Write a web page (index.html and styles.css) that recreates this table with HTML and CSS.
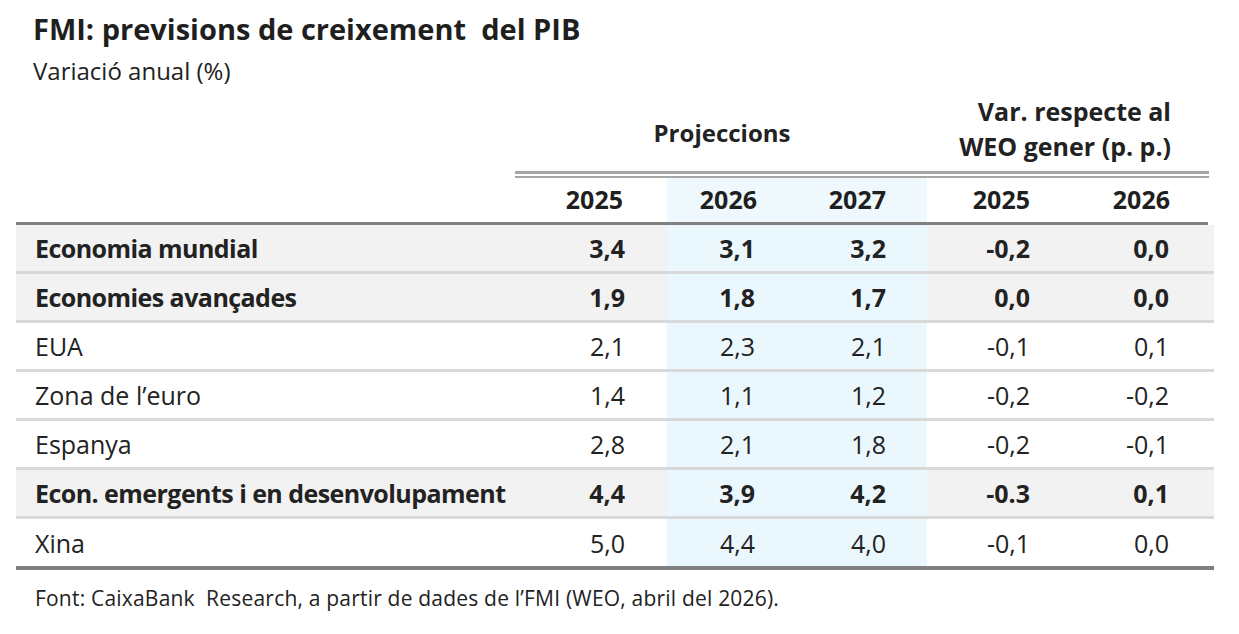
FILE: index.html
```html
<!DOCTYPE html>
<html lang="ca">
<head>
<meta charset="utf-8">
<title>FMI: previsions de creixement del PIB</title>
<link rel="stylesheet" href="styles.css">
</head>
<body>
<div class="page">
  <h1 class="title">FMI: previsions de creixement&nbsp; del PIB</h1>
  <p class="subtitle">Variació anual (%)</p>

  <div class="table">
    <div class="head-top">
      <div class="proj">Projeccions</div>
      <div class="var">Var. respecte al<br>WEO gener (p. p.)</div>
    </div>
    <div class="dbl"></div>
    <div class="row years">
      <div class="c"></div>
      <div class="c">2025</div>
      <div class="c hl">2026</div>
      <div class="c hl">2027</div>
      <div class="c">2025</div>
      <div class="c">2026</div>
    </div>

    <div class="row shade bold">
      <div class="c">Economia mundial</div>
      <div class="c">3,4</div>
      <div class="c hl">3,1</div>
      <div class="c hl">3,2</div>
      <div class="c">-0,2</div>
      <div class="c">0,0</div>
    </div>
    <div class="row shade bold">
      <div class="c">Economies avançades</div>
      <div class="c">1,9</div>
      <div class="c hl">1,8</div>
      <div class="c hl">1,7</div>
      <div class="c">0,0</div>
      <div class="c">0,0</div>
    </div>
    <div class="row">
      <div class="c">EUA</div>
      <div class="c">2,1</div>
      <div class="c hl">2,3</div>
      <div class="c hl">2,1</div>
      <div class="c">-0,1</div>
      <div class="c">0,1</div>
    </div>
    <div class="row">
      <div class="c">Zona de l’euro</div>
      <div class="c">1,4</div>
      <div class="c hl">1,1</div>
      <div class="c hl">1,2</div>
      <div class="c">-0,2</div>
      <div class="c">-0,2</div>
    </div>
    <div class="row">
      <div class="c">Espanya</div>
      <div class="c">2,8</div>
      <div class="c hl">2,1</div>
      <div class="c hl">1,8</div>
      <div class="c">-0,2</div>
      <div class="c">-0,1</div>
    </div>
    <div class="row shade bold">
      <div class="c">Econ. emergents i en desenvolupament</div>
      <div class="c">4,4</div>
      <div class="c hl">3,9</div>
      <div class="c hl">4,2</div>
      <div class="c">-0.3</div>
      <div class="c">0,1</div>
    </div>
    <div class="row last">
      <div class="c">Xina</div>
      <div class="c">5,0</div>
      <div class="c hl">4,4</div>
      <div class="c hl">4,0</div>
      <div class="c">-0,1</div>
      <div class="c">0,0</div>
    </div>
  </div>

  <p class="source">Font: CaixaBank&nbsp; Research, a partir de dades de l’FMI (WEO, abril del 2026).</p>
</div>
</body>
</html>
```

FILE: styles.css
```css
html, body {
  margin: 0;
  padding: 0;
  background: #ffffff;
}

body {
  font-family: "Open Sans", "Noto Sans", sans-serif;
  color: #222222;
}

.page {
  width: 1239px;
  padding-top: 12px;
}

.title {
  margin: 0 0 0 33px;
  font-size: 29px;
  line-height: 33px;
  font-weight: 700;
  color: #1f1f1f;
}

.subtitle {
  margin: 12px 0 0 33px;
  font-size: 24px;
  line-height: 28px;
  font-weight: 400;
  color: #222222;
}

.table {
  margin: 8px 0 0 16px;
  width: 1198px;
  font-size: 25px;
}

.head-top {
  display: grid;
  grid-template-columns: 521px 390px 287px;
  height: 78px;
  font-weight: 700;
}

.proj {
  grid-column: 2;
  align-self: center;
  text-align: center;
  padding-right: 20px;
  padding-top: 2px;
  font-size: 24px;
  line-height: 30px;
}

.var {
  grid-column: 3;
  align-self: start;
  margin-top: 1px;
  text-align: right;
  padding-right: 43px;
  line-height: 35px;
}

.dbl {
  margin-left: 499px;
  margin-right: 5px;
  height: 2px;
  border-top: 3px solid #a6a6a6;
  border-bottom: 2px solid #a6a6a6;
}

.row {
  display: grid;
  grid-template-columns: 521px 130px 130px 130px 143px 144px;
  height: 46px;
  border-bottom: 3px solid #d9d9d9;
}

.row .c {
  display: flex;
  align-items: center;
  justify-content: flex-end;
  white-space: nowrap;
}

.row .c:nth-child(1) {
  justify-content: flex-start;
  padding-left: 19px;
}

.row.bold .c:nth-child(1) {
  letter-spacing: -0.55px;
}

.row .c:nth-child(2) { padding-right: 42px; }
.row .c:nth-child(3) { padding-right: 42px; }
.row .c:nth-child(4) { padding-right: 41px; }
.row .c:nth-child(5) { padding-right: 40px; }
.row .c:nth-child(6) { padding-right: 45px; }

.row.years {
  grid-template-columns: 521px 130px 130px 130px 143px 138px;
  margin-right: 6px;
  height: 44px;
  border-bottom: 3px solid #808080;
  font-weight: 700;
  color: #1f1f1f;
}

.row.years .c {
  padding-bottom: 3px;
}

.row.years .c:nth-child(2) { padding-right: 44px; }
.row.years .c:nth-child(3) { padding-right: 40px; }
.row.years .c:nth-child(6) { padding-right: 38px; }

.row.years .c.hl {
  background: #eef8fd;
}

.row.shade {
  background: #f2f2f2;
}

.row.bold {
  font-weight: 700;
}

.row .c.hl {
  background: #eaf7fd;
}

.row.last {
  height: 47px;
  border-bottom: 4px solid #808080;
}

.source {
  margin: 15px 0 0 35px;
  font-size: 21px;
  line-height: 26px;
  letter-spacing: 0.2px;
  color: #222222;
}
```
